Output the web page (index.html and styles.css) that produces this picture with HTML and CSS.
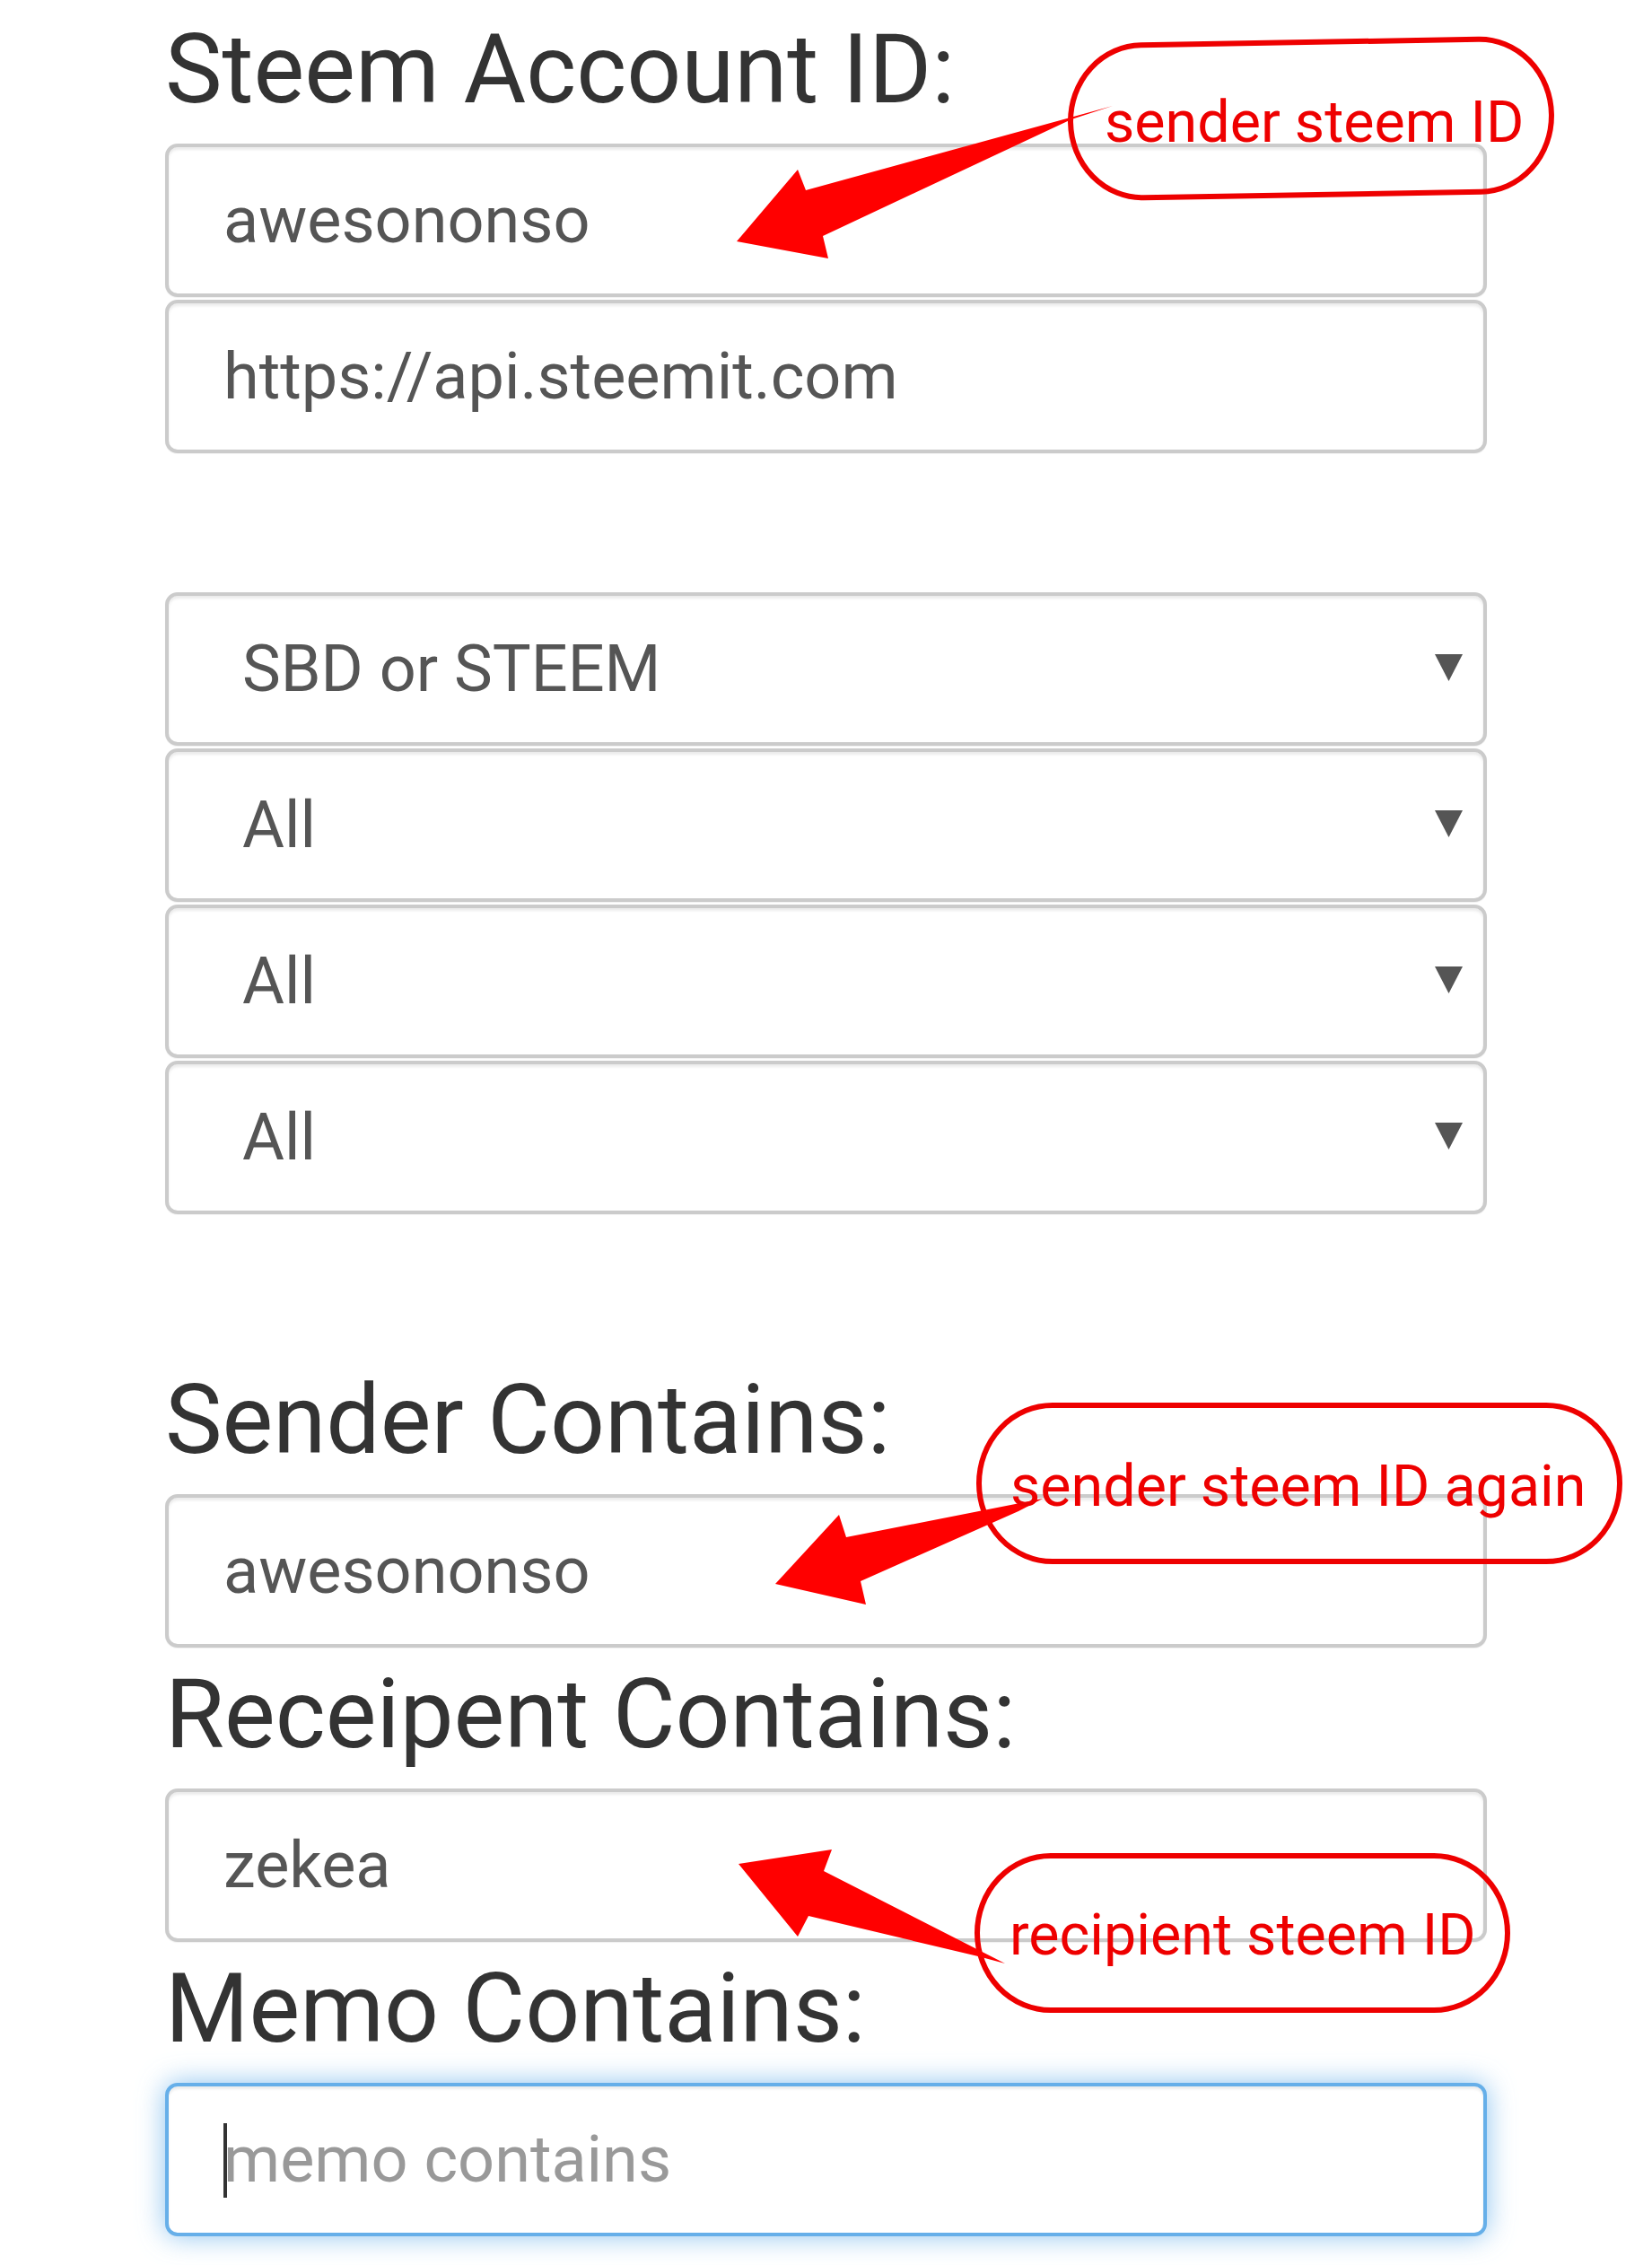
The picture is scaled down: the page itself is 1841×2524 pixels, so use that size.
FILE: index.html
```html
<!DOCTYPE html>
<html lang="en">
<head>
<meta charset="utf-8">
<title>Steem transfer search</title>
<link rel="stylesheet" href="styles.css">
</head>
<body>
<form class="form">
  <label class="field-label first" for="account">Steem Account ID:</label>
  <input class="control" id="account" type="text" value="awesononso">
  <input class="control" type="text" value="https://api.steemit.com">

  <div class="select-group">
    <div class="select-wrap">
      <select class="control select"><option>SBD or STEEM</option></select>
      <svg class="select-caret" viewBox="0 0 31 30"><polygon points="0,0 31,0 15.5,30"/></svg>
    </div>
    <div class="select-wrap">
      <select class="control select"><option>All</option></select>
      <svg class="select-caret" viewBox="0 0 31 30"><polygon points="0,0 31,0 15.5,30"/></svg>
    </div>
    <div class="select-wrap">
      <select class="control select"><option>All</option></select>
      <svg class="select-caret" viewBox="0 0 31 30"><polygon points="0,0 31,0 15.5,30"/></svg>
    </div>
    <div class="select-wrap">
      <select class="control select"><option>All</option></select>
      <svg class="select-caret" viewBox="0 0 31 30"><polygon points="0,0 31,0 15.5,30"/></svg>
    </div>
  </div>

  <label class="field-label section" for="sender">Sender Contains:</label>
  <input class="control" id="sender" type="text" value="awesononso">

  <label class="field-label" for="recipient">Receipent Contains:</label>
  <input class="control" id="recipient" type="text" value="zekea">

  <label class="field-label" for="memo">Memo Contains:</label>
  <div class="memo-wrap">
    <input class="control focused" id="memo" type="text" placeholder="memo contains">
  </div>
</form>

<svg class="annotations" viewBox="0 0 1841 2524" width="1841" height="2524">
  <g class="note">
    <rect class="bubble" x="1193" y="47" width="536" height="170" rx="80" ry="86" transform="rotate(-1 1461 132)"/>
    <polygon class="arrow" points="1240,118 898,212 889,189 821,269 923,288 917,263 1194,133"/>
    <text class="note-text" x="1231" y="158">sender steem ID</text>
  </g>
  <g class="note">
    <rect class="bubble" x="1091" y="1566" width="714" height="174" rx="82" ry="87"/>
    <polygon class="arrow" points="1162,1670 943,1713 935,1688 864,1765 965,1788 959,1762 1135,1684"/>
    <text class="note-text" x="1126" y="1678">sender steem ID again</text>
  </g>
  <g class="note">
    <rect class="bubble" x="1089" y="2068" width="591" height="172" rx="82" ry="86"/>
    <polygon class="arrow" points="823,2077 927,2061 918,2085 1120,2188 1090,2180 901,2135 889,2158"/>
    <text class="note-text" x="1125" y="2178">recipient steem ID</text>
  </g>
</svg>
</body>
</html>
```

FILE: styles.css
```css
html, body {
  margin: 0;
  padding: 0;
  background: #ffffff;
}

body {
  position: relative;
  width: 1841px;
  height: 2524px;
  overflow: hidden;
  font-family: Roboto, "Liberation Sans", Arial, sans-serif;
}

.form {
  width: 1473px;
  margin: 0 0 0 184px;
  padding-top: 19px;
}

.field-label {
  display: block;
  font-family: Roboto, "Liberation Sans", Arial, sans-serif;
  font-size: 107px;
  line-height: 118px;
  font-weight: 400;
  color: #333333;
  margin: 16px 0 23px;
  white-space: nowrap;
}

.field-label.first {
  margin-top: 0;
}

.field-label.section {
  margin-top: 171px;
}

.control {
  display: block;
  width: 100%;
  height: 171px;
  box-sizing: border-box;
  margin: 0 0 3px;
  padding: 0 61px;
  border: 4px solid #cbcbcb;
  border-radius: 14px;
  background: #ffffff;
  box-shadow: inset 0 3px 3px rgba(0, 0, 0, 0.08), 0 1px 1px rgba(0, 0, 0, 0.06);
  font-family: Roboto, "Liberation Sans", Arial, sans-serif;
  font-size: 72px;
  line-height: normal;
  color: #555555;
  outline: none;
}

.select-group {
  margin-top: 155px;
}

.select-wrap {
  position: relative;
}

.select {
  -webkit-appearance: none;
  appearance: none;
  padding: 0 100px 0 82px;
}

.select-caret {
  position: absolute;
  right: 27px;
  top: 69px;
  width: 31px;
  height: 30px;
  fill: #555555;
  pointer-events: none;
}

.memo-wrap {
  position: relative;
}

.memo-wrap::after {
  content: "";
  position: absolute;
  left: 65px;
  top: 45px;
  width: 4px;
  height: 83px;
  background: #333333;
}

.control.focused {
  border-color: #66afe9;
  box-shadow: inset 0 3px 3px rgba(0, 0, 0, 0.075), 0 0 30px rgba(102, 175, 233, 0.75);
}

.control::placeholder {
  color: #999999;
  opacity: 1;
}

.annotations {
  position: absolute;
  top: 0;
  left: 0;
  width: 1841px;
  height: 2524px;
  pointer-events: none;
}

.bubble {
  fill: none;
  stroke: #ee0000;
  stroke-width: 6;
}

.arrow {
  fill: #ff0000;
}

.note-text {
  font-family: Roboto, "Liberation Sans", Arial, sans-serif;
  font-size: 64.6px;
  fill: #ee0000;
}
```
